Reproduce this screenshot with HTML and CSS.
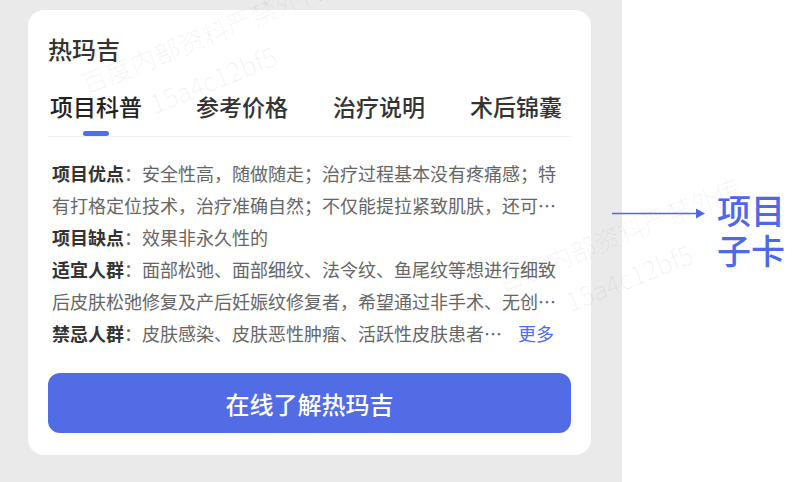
FILE: index.html
```html
<!DOCTYPE html>
<html lang="zh-CN">
  <head>
    <meta charset="UTF-8" />
    <meta name="viewport" content="width=device-width, initial-scale=1.0" />
    <title>项目子卡</title>
    <link rel="stylesheet" href="styles.css">
  </head>
  <body>
    <div class="page">
      <div class="panel">
        <div class="card">
          <div class="card-title">热玛吉</div>
          <div class="tabs">
            <div class="tab active">
              <span>项目科普</span>
              <i class="tab-bar"></i>
            </div>
            <div class="tab"><span>参考价格</span></div>
            <div class="tab"><span>治疗说明</span></div>
            <div class="tab"><span>术后锦囊</span></div>
          </div>
          <div class="info">
            <p class="clamp-2"><b>项目优点</b>：安全性高，随做随走；治疗过程基本没有疼痛感；特有打格定位技术，治疗准确自然；不仅能提拉紧致肌肤，还可以刺激胶原蛋白持续再生</p>
            <p class="clamp-1"><b>项目缺点</b>：效果非永久性的</p>
            <p class="clamp-2"><b>适宜人群</b>：面部松弛、面部细纹、法令纹、鱼尾纹等想进行细致后皮肤松弛修复及产后妊娠纹修复者，希望通过非手术、无创伤方式改善肌肤状态的人群</p>
            <div class="info-last">
              <p class="clamp-1"><b>禁忌人群</b>：皮肤感染、皮肤恶性肿瘤、活跃性皮肤患者、孕妇及哺乳期女性</p>
              <a class="more" href="#">更多</a>
            </div>
          </div>
          <a class="btn" href="#">在线了解热玛吉</a>
        </div>
      </div>
      <div class="note">
        <svg class="arrow" width="93" height="40" viewBox="0 0 93 40">
          <line x1="0" y1="23.5" x2="86" y2="23.5" stroke="#4d68ea" stroke-width="1.6" />
          <polygon points="84,18.5 93,23.5 84,28.5" fill="#4d68ea" />
        </svg>
        <div class="note-text">项目<br />子卡</div>
      </div>
    </div>
    <!-- 水印 -->
    <div class="watermark wm-1">百度内部资料严禁外传<br /><span>15a4c12bf5</span></div>
    <div class="watermark wm-2">百度内部资料严禁外传<br /><span>15a4c12bf5</span></div>
  </body>
</html>
```

FILE: styles.css
```css
* {
  box-sizing: border-box;
}
body {
  margin: 0;
  width: 800px;
  height: 482px;
  overflow: hidden;
  background-color: white;
  font-family: "Noto Sans CJK SC", "Liberation Sans", sans-serif;
  position: relative;
}
.page {
  display: flex;
  align-items: flex-start;
}
.panel {
  width: 622px;
  height: 482px;
  background-color: #eaeaea;
  padding: 10px 31px 0 28px;
}
.card {
  background-color: white;
  /* 圆角 */
  border-radius: 16px;
  padding: 23px 20px 22px 20px;
}
.card-title {
  font-size: 24px;
  line-height: 32px;
  font-weight: 500;
  color: #333;
}
.tabs {
  display: flex;
  align-items: flex-start;
  gap: 45px;
  margin-top: 26px;
  padding-left: 2px;
  border-bottom: 1px solid #f0f0f0;
}
.tab {
  display: flex;
  flex-direction: column;
  align-items: center;
  font-size: 23px;
  line-height: 30px;
  font-weight: 500;
  color: #333;
}
.tab.active {
  color: #222;
  margin-right: 9px;
}
.tab-bar {
  display: block;
  width: 26px;
  height: 5px;
  margin-top: 10px;
  border-radius: 3px;
  background-color: #4e6ef2;
}
.info {
  margin-top: 20px;
  padding: 0 0 0 4px;
  font-size: 18px;
  line-height: 32px;
  color: #666;
}
.info p {
  margin: 0;
}
.info b {
  color: #333;
  font-weight: 600;
}
.clamp-1 {
  white-space: nowrap;
  overflow: hidden;
  text-overflow: ellipsis;
}
.clamp-2 {
  display: -webkit-box;
  -webkit-box-orient: vertical;
  -webkit-line-clamp: 2;
  overflow: hidden;
}
.info-last {
  display: flex;
}
.info-last p {
  flex: 1;
  min-width: 0;
}
.more {
  margin: 0 17px 0 13px;
  color: #4e6ef2;
  text-decoration: none;
}
.btn {
  display: flex;
  align-items: center;
  justify-content: center;
  height: 60px;
  margin-top: 24px;
  border-radius: 12px;
  background-color: #526ce6;
  color: white;
  font-size: 24px;
  font-weight: 500;
  text-decoration: none;
}
.note {
  display: flex;
  align-items: flex-start;
  margin-top: 190px;
  margin-left: -10px;
}
.arrow {
  display: block;
}
.note-text {
  margin-left: 12px;
  font-size: 34px;
  line-height: 40px;
  font-weight: 500;
  color: #4d68ea;
}
.watermark {
  position: absolute;
  transform: rotate(-22deg);
  transform-origin: 0 0;
  font-size: 26px;
  line-height: 44px;
  font-weight: 300;
  color: rgba(0, 0, 0, 0.06);
  white-space: nowrap;
  pointer-events: none;
}
.watermark span {
  padding-left: 56px;
}
.wm-1 {
  left: 74px;
  top: 64px;
}
.wm-2 {
  left: 490px;
  top: 262px;
}
```
